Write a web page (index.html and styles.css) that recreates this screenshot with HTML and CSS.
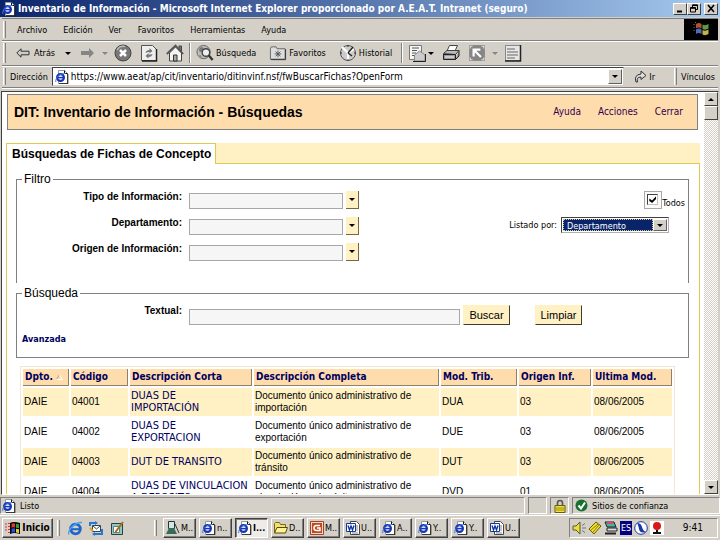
FILE: index.html
```
<!DOCTYPE html>
<html lang="es">

<head>
    <meta charset="UTF-8">
    <meta name="viewport" content="width=device-width, initial-scale=1.0">
    <title>Inventario de Información</title>
    <link rel="stylesheet" href="styles.css">
</head>

<body>
    <svg class="sprite" aria-hidden="true">
        <symbol id="ie" viewBox="0 0 14 14">
            <path d="M3.500 .5h6l3 3v10h-9z" fill="#fff" stroke="#999"/>
            <path d="M9.500 .5v3h3M12.800 4v9.800H4" fill="none" stroke="#111"/>
            <circle cx="5.500" cy="7.500" r="3.400" fill="#fff" stroke="#1634b4" stroke-width="2.200"/>
            <path d="M3 7.600h6" stroke="#1634b4" stroke-width="1.500"/>
            <path d="M.8 12C0 8 5 3 10.500 3.500" fill="none" stroke="#3a7be0" stroke-width="1"/>
        </symbol>
        <symbol id="word" viewBox="0 0 14 14">
            <path d="M4.500 .5h6l3 3v10h-9z" fill="#fff" stroke="#444"/>
            <path d="M10 5h2M10 7h2M10 9h2M6 12h6" stroke="#888"/>
            <path d="M.5 2.500h9v8h-9z" fill="#fff" stroke="#123a9c"/>
            <path d="M2 4.500l1.500 4.500L5 5l1.500 4L8 4.500" fill="none" stroke="#123a9c" stroke-width="1.400"/>
        </symbol>
    </svg>

    <header class="titlebar">
        <svg class="icon14"><use href="#ie"/></svg>
        <h1>Inventario de Información - Microsoft Internet Explorer proporcionado por A.E.A.T. Intranet (seguro)</h1>
        <div class="window-buttons">
            <button aria-label="Minimizar"><svg viewBox="0 0 10 9"><path d="M2 7.500h5" stroke="#000" stroke-width="2"/></svg></button>
            <button aria-label="Restaurar"><svg viewBox="0 0 10 9"><path d="M3.500 3V.8h5v4.700H7M3.500 1.500h5M1.500 3.500h5v4.500h-5zM1.500 4.300h5" fill="none" stroke="#000"/></svg></button>
            <button class="close" aria-label="Cerrar ventana"><svg viewBox="0 0 10 9"><path d="M2 1l6 7M8 1L2 8" stroke="#000" stroke-width="1.600"/></svg></button>
        </div>
    </header>

    <nav class="menubar">
        <span class="grip"></span>
        <button>Archivo</button>
        <button>Edición</button>
        <button>Ver</button>
        <button>Favoritos</button>
        <button>Herramientas</button>
        <button>Ayuda</button>
        <svg class="throbber" viewBox="0 0 34 21">
            <path d="M0 0h34v21H0z" fill="#000"/>
            <path d="M12 5q3-2 5.500 0v4.500q-3-2-5.500 0z" fill="#b4532f"/>
            <path d="M18.500 5.500q3 1.500 6-.5v4.500q-3 2-6 .5z" fill="#5f9a4a"/>
            <path d="M12 10.500q3-2 5.500 0V15q-3-2-5.500 0z" fill="#4a6fb8"/>
            <path d="M18.500 11q3 1.500 6-.5V15q-3 2-6 .5z" fill="#c9b04a"/>
            <path d="M10 5v1M10 8v1M10 11v1M11 3.500h1" stroke="#774"/>
        </svg>
    </nav>

    <div class="toolbar">
        <span class="grip"></span>
        <button class="tool back"><svg viewBox="0 0 14 12"><path d="M.8 6L5 1.800v2.400h8v3.600H5v2.400z" fill="#ccc" stroke="#333"/></svg>Atrás</button>
        <span class="caret"></span>
        <button class="tool forward" aria-label="Adelante"><svg viewBox="0 0 14 12"><path d="M14 6L9 1v3H1v4h8v3z" fill="#858585"/></svg></button>
        <span class="caret off"></span>
        <button class="tool stop" aria-label="Detener"><svg viewBox="0 0 18 18"><circle cx="9" cy="9" r="8" fill="#777" stroke="#444"/><path d="M3 6q3-5 8-3.500" fill="none" stroke="#bbb" stroke-width="1.500"/><path d="M6 6l6 6M12 6l-6 6" stroke="#fff" stroke-width="2.500"/></svg></button>
        <button class="tool refresh" aria-label="Actualizar"><svg viewBox="0 0 18 18"><path d="M1.500 1.500h11l4 4v11h-15z" fill="#eee" stroke="#555"/><path d="M16.500 5v12H2" fill="none" stroke="#222" stroke-width="1.500"/><path d="M5.500 9q.5-3 4-3V4l3 3-3 2.500V8q-2 0-4 1zM12.500 10q-.5 3-4 3v1.500l-3-2.500 3-3v1.500q2 0 4-.5z" fill="#777"/></svg></button>
        <button class="tool home" aria-label="Inicio"><svg viewBox="0 0 18 18"><path d="M13 2h2.500v5H13z" fill="#777" stroke="#444"/><path d="M3.500 9v8h12V9L9.500 3z" fill="#f4f4f4" stroke="#444"/><path d="M.8 10L9.500 1.500l7.700 8.500" fill="none" stroke="#555" stroke-width="1.800"/><path d="M7.500 11h3.500v6H7.500z" fill="#aaa" stroke="#333"/></svg></button>
        <span class="divider"></span>
        <button class="tool search"><svg viewBox="0 0 19 18"><circle cx="8" cy="8" r="7" fill="#bbb" stroke="#666"/><path d="M3 5q3-4 5-1-1 4-4 4zM3 11q3 0 3 3" fill="#777"/><circle cx="10.500" cy="8.500" r="4" fill="#eee" stroke="#444" stroke-width="1.500"/><path d="M13.500 11.500l4 5" stroke="#333" stroke-width="2.500"/></svg>Búsqueda</button>
        <button class="tool favs"><svg viewBox="0 0 19 16"><path d="M1.500 3.500l1-2h5l1 2h8.500v11H1.500z" fill="#ddd" stroke="#666"/><path d="M17.500 4v11H2" fill="none" stroke="#333"/><path d="M9.500 5.500v7M6 9h7M7 6.500l5 5M12 6.500l-5 5" stroke="#555"/></svg>Favoritos</button>
        <button class="tool history"><svg viewBox="0 0 18 18"><circle cx="9" cy="9" r="7.500" fill="#ccc" stroke="#555"/><path d="M9 9L3 3M9 9l6-4M9 9v7" stroke="#fff" stroke-width="2"/><path d="M9 9l5-6M9 9l4 3" stroke="#222" stroke-width="1.400"/><path d="M9 1v2M9 15v2M1 9h2M15 9h2" stroke="#333"/></svg>Historial</button>
        <span class="divider"></span>
        <button class="tool mail" aria-label="Correo"><svg viewBox="0 0 18 18"><path d="M1.500 1.500h12v14h-12z" fill="#f5f5f5" stroke="#777"/><path d="M4 4h7M4 6.500h5M4 9h4M4 11.500h2" stroke="#555"/><path d="M6.500 11l5-4 5.500 4v6H6.500z" fill="#ccc" stroke="#888"/><path d="M17.500 10v7.500H5" fill="none" stroke="#222"/></svg></button>
        <span class="caret"></span>
        <button class="tool print" aria-label="Imprimir"><svg viewBox="0 0 18 18"><path d="M5 7l2.500-5.500h8L13 7z" fill="#fff" stroke="#444"/><path d="M1.500 9.500L5 6.500h12l-3.500 4z" fill="#bbb" stroke="#444"/><path d="M1.500 10v5.500h12V10.500H1.500zM13.500 15.500L17 12V6.500" fill="#999" stroke="#222"/><path d="M3 13h9" stroke="#fff"/></svg></button>
        <button class="tool size" aria-label="Tamaño"><svg viewBox="0 0 16 16"><path d="M1 1h14v14H1z" fill="#858585"/><path d="M5 11V5h6M5.500 5.500l6 6" fill="none" stroke="#fff" stroke-width="2"/><path d="M2 4V2h2M12 2h2v2M2 12v2h2M12 14h2v-2" fill="none" stroke="#ddd"/></svg></button>
        <span class="caret off"></span>
        <button class="tool discuss" aria-label="Discutir"><svg viewBox="0 0 18 18"><path d="M1.500 1.500h15v15h-15z" fill="#e6e6e6" stroke="#888"/><path d="M16.500 1v16H1" fill="none" stroke="#222" stroke-width="1.500"/><path d="M3 5h8M3 8h11M3 11h11M3 14h8" stroke="#666" stroke-width="1.200"/></svg></button>
    </div>

    <form class="addressbar">
        <span class="grip"></span>
        <label for="url">Dirección</label>
        <div class="address">
            <svg class="icon14"><use href="#ie"/></svg>
            <input id="url" type="text" value="https://www.aeat/ap/cit/inventario/ditinvinf.nsf/fwBuscarFichas?OpenForm">
            <button type="button" class="drop" aria-label="Mostrar direcciones"><span class="caret"></span></button>
        </div>
        <button type="button" class="go"><svg viewBox="0 0 13 13"><path d="M2 12Q-.5 5 7 4V1l5 4.500-5 4V7Q2 7 3.500 12z" fill="#ddd" stroke="#333"/></svg>Ir</button>
        <span class="grip"></span>
        <button type="button" class="links">Vínculos</button>
    </form>

    <div class="viewport">
        <main class="page">
            <div class="banner">
                <h2>DIT: Inventario de Información - Búsquedas</h2>
                <a href="#">Ayuda</a>
                <a href="#">Acciones</a>
                <a href="#">Cerrar</a>
            </div>

            <div class="tabs"><a class="tab" href="#">Búsquedas de Fichas de Concepto</a><span class="tab-fill"></span></div>

            <div class="panel">
                <form>
                    <fieldset class="filter">
                        <legend>Filtro</legend>
                        <div class="fields">
                            <label for="tipo">Tipo de Información:</label>
                            <input id="tipo" type="text">
                            <button type="button" class="pick" aria-label="Elegir tipo"><span class="caret"></span></button>
                            <label for="depto">Departamento:</label>
                            <input id="depto" type="text">
                            <button type="button" class="pick" aria-label="Elegir departamento"><span class="caret"></span></button>
                            <label for="origen">Origen de Información:</label>
                            <input id="origen" type="text">
                            <button type="button" class="pick" aria-label="Elegir origen"><span class="caret"></span></button>
                        </div>
                        <div class="listing">
                            <label class="all"><span class="check"><input type="checkbox" checked></span>Todos</label>
                            <div class="by">
                                <label for="listado">Listado por:</label>
                                <div class="select">
                                    <select id="listado">
                                        <option>Departamento</option>
                                    </select>
                                    <span class="drop"><span class="caret"></span></span>
                                </div>
                            </div>
                        </div>
                    </fieldset>

                    <fieldset class="search-box">
                        <legend>Búsqueda</legend>
                        <div class="text-search">
                            <label for="textual">Textual:</label>
                            <input id="textual" type="text">
                            <div class="actions">
                                <button type="button">Buscar</button>
                                <button type="reset">Limpiar</button>
                            </div>
                        </div>
                        <a class="advanced" href="#">Avanzada</a>
                    </fieldset>
                </form>

                <table>
                    <colgroup>
                        <col class="c-dpto"><col class="c-codigo"><col class="c-corta"><col class="c-completa"><col class="c-mod"><col class="c-origen"><col class="c-fecha">
                    </colgroup>
                    <thead>
                        <tr>
                            <th>Dpto. <svg class="sort" viewBox="0 0 7 6"><path d="M.5 5.500L3.500 .5" stroke="#b98" fill="none"/><path d="M3.500 .5l3 5h-6" stroke="#fff" fill="none"/></svg></th>
                            <th>Código</th>
                            <th>Descripción Corta</th>
                            <th>Descripción Completa</th>
                            <th>Mod. Trib.</th>
                            <th>Origen Inf.</th>
                            <th>Ultima Mod.</th>
                        </tr>
                    </thead>
                    <tbody>
                        <tr>
                            <td>DAIE</td>
                            <td>04001</td>
                            <td><a href="#">DUAS DE<br>IMPORTACIÓN</a></td>
                            <td>Documento único administrativo de importación</td>
                            <td>DUA</td>
                            <td>03</td>
                            <td>08/06/2005</td>
                        </tr>
                        <tr>
                            <td>DAIE</td>
                            <td>04002</td>
                            <td><a href="#">DUAS DE<br>EXPORTACION</a></td>
                            <td>Documento único administrativo de exportación</td>
                            <td>DUE</td>
                            <td>03</td>
                            <td>08/06/2005</td>
                        </tr>
                        <tr>
                            <td>DAIE</td>
                            <td>04003</td>
                            <td><a href="#">DUT DE TRANSITO</a></td>
                            <td>Documento único administrativo de<br>tránsito</td>
                            <td>DUT</td>
                            <td>03</td>
                            <td>08/06/2005</td>
                        </tr>
                        <tr>
                            <td>DAIE</td>
                            <td>04004</td>
                            <td><a href="#">DUAS DE VINCULACION<br>A DEPOSITO</a></td>
                            <td>Documento único administrativo de vinculación a depósito</td>
                            <td>DVD</td>
                            <td>01</td>
                            <td>08/06/2005</td>
                        </tr>
                    </tbody>
                </table>
            </div>
        </main>
        <div class="scrollbar">
            <button aria-label="Subir"><span class="caret up"></span></button>
            <span class="thumb"></span>
            <span class="track"></span>
            <button aria-label="Bajar"><span class="caret"></span></button>
        </div>
    </div>

    <div class="statusbar">
        <div class="cell status"><svg class="icon14"><use href="#ie"/></svg>Listo</div>
        <div class="cell blank"></div>
        <div class="cell lock"><svg viewBox="0 0 12 14"><path d="M3.500 7V4q0-2.500 2.500-2.500T8.500 4v3" fill="none" stroke="#555" stroke-width="1.600"/><path d="M1 6.500h10v7H1z" fill="#f0e040" stroke="#665c00"/><path d="M2 9h8M2 11h8" stroke="#998a10"/></svg></div>
        <div class="cell zone"><svg viewBox="0 0 13 13"><circle cx="6.500" cy="6.500" r="6" fill="#187030"/><path d="M3.500 6.500l2.500 3 4-6" fill="none" stroke="#fff" stroke-width="2"/></svg>Sitios de confianza</div>
    </div>

    <footer class="taskbar">
        <button class="start"><svg viewBox="0 0 16 14"><path d="M0 3h2M0 6h2M0 9h2M3 2.500h2M3 5.500h2M3 8.500h2M3 11.500h2" stroke="#d33"/><path d="M5 2q3-2 10 0v11q-6-2-10 0z" fill="#000"/><path d="M6.500 2.800q2-.8 3.500-.2v4q-2-.6-3.500.2z" fill="#e03a20"/><path d="M11 2.800q1.500 0 3 .5v4q-1.500-.6-3-.6z" fill="#30a030"/><path d="M6.500 7.800q2-.8 3.500-.2v4q-2-.6-3.500.2z" fill="#2850d8"/><path d="M11 7.700q1.500 0 3 .5v4q-1.500-.6-3-.6z" fill="#e8d020"/></svg>Inicio</button>
        <span class="grip"></span>
        <div class="quick">
            <button aria-label="Internet Explorer"><svg viewBox="0 0 15 15"><circle cx="7.500" cy="8" r="4.800" fill="none" stroke="#1c66c8" stroke-width="2.800"/><path d="M4 8.200h9" stroke="#1c66c8" stroke-width="2"/><path d="M.8 13.500C-.5 9 7 1 14 1.500" fill="none" stroke="#48a0f0" stroke-width="1.500"/></svg></button>
            <button aria-label="Outlook Express"><svg viewBox="0 0 15 15"><path d="M3.500 4.500h8v6h-8z" fill="#fff" stroke="#345"/><path d="M4 5l3.500 3L11 5" fill="none" stroke="#345"/><path d="M1 5V2h6M5 13h8V8" fill="none" stroke="#2878d0" stroke-width="2"/><path d="M6 0l3 2-3 2zM6 11v4l-3-2z" fill="#2878d0"/><path d="M1 7l3 3" stroke="#e0a020" stroke-width="2"/></svg></button>
            <button aria-label="Mostrar escritorio"><svg viewBox="0 0 15 15"><path d="M1.500 2.500h11v11h-11z" fill="#8cc8c8" stroke="#244"/><path d="M3.500 5.500h6v6h-6z" fill="#fff" stroke="#777"/><path d="M13 1L7 9l-1.500 2" stroke="#a07010" stroke-width="2"/></svg></button>
        </div>
        <span class="grip"></span>
        <div class="tasks">
            <button><svg viewBox="0 0 14 14"><path d="M2.500 .5h6v7h-6z" fill="#cfe8e0" stroke="#234"/><path d="M0 13l3-6h5l3 6z" fill="#3a6a5a"/><path d="M9 3l4 9" stroke="#333"/></svg>M..</button>
            <button><svg><use href="#ie"/></svg>n..</button>
            <button class="active"><svg><use href="#ie"/></svg>I...</button>
            <button><svg viewBox="0 0 14 14"><path d="M.5 11.500v-9l1-1h4l1 2h5v8z" fill="#f4e070" stroke="#776a10"/><path d="M.5 12L3 6.500h10.500L11.500 12z" fill="#fff29a" stroke="#554a00"/></svg>D..</button>
            <button><svg viewBox="0 0 14 14"><path d="M.5 .5h13v13H.5z" fill="#e8dcd0" stroke="#b0401c"/><path d="M2 2h10v10H2z" fill="#c04a20"/><path d="M10 4.500H6.500A2.500 2.500 0 0 0 6.500 9.500H10V7H7" fill="none" stroke="#fff" stroke-width="1.500"/></svg>M..</button>
            <button><svg><use href="#word"/></svg>U..</button>
            <button><svg><use href="#ie"/></svg>A..</button>
            <button><svg><use href="#ie"/></svg>Y..</button>
            <button><svg><use href="#ie"/></svg>Y..</button>
            <button><svg><use href="#word"/></svg>U..</button>
        </div>
        <div class="tray">
            <svg viewBox="0 0 14 14"><path d="M1 5h3l4-4v12L4 9H1z" fill="#f0e030" stroke="#554"/><path d="M10 4.500l3-2M10 7h4M10 9.500l3 2" stroke="#777"/></svg>
            <svg viewBox="0 0 14 14"><path d="M1 8l7-7 5 4-7 8z" fill="#f0e030" stroke="#665c00"/><path d="M3 9l7-6M5 11l6-7" stroke="#887a10"/></svg>
            <svg viewBox="0 0 14 14"><path d="M1 1h9l2 5H3z" fill="#40b8a0" stroke="#222"/><path d="M3 2h6" stroke="#e04080" stroke-width="2"/><path d="M3 7h10v3H3z" fill="#ddd" stroke="#222"/><path d="M1 12.500h11" stroke="#222" stroke-width="2"/></svg>
            <span class="lang">ES</span>
            <svg viewBox="0 0 14 14"><circle cx="7" cy="7" r="6.300" fill="#fff" stroke="#1838a8"/><path d="M3 2q4 0 5 4t4 5q-6 2-7-3T3 2z" fill="#1838a8"/></svg>
            <svg viewBox="0 0 14 14"><path d="M0 0h14v14H0z" fill="#fff"/><circle cx="7" cy="5" r="4" fill="#d81818"/><path d="M6 9h2v2h3v2H3v-2h3z" fill="#111"/></svg>
            <time>9:41</time>
        </div>
    </footer>
</body>

</html>
```

FILE: styles.css
```
* {
    box-sizing: border-box;
}

body {
    font-family: "DejaVu Sans Condensed", "DejaVu Sans", sans-serif;
    font-size: 9px;
    line-height: 12px;
    color: #000;
    background: #d4d0c8;
    margin: 0;
    height: 100vh;
    display: flex;
    flex-direction: column;
    overflow: hidden;
}

button,
input,
select {
    font: inherit;
    color: inherit;
    margin: 0;
    padding: 0;
    border: none;
    border-radius: 0;
    background: none;
    outline: none;
}

button {
    display: flex;
    align-items: center;
    justify-content: center;
    cursor: pointer;
}

a {
    color: #000060;
    text-decoration: none;
}

svg {
    display: block;
    flex: none;
}

.sprite {
    position: absolute;
    width: 0;
    height: 0;
}

.icon14 {
    width: 14px;
    height: 14px;
}

.grip {
    width: 3px;
    align-self: stretch;
    margin: 2px 0;
    border-left: 1px solid #fff;
    border-right: 1px solid #808080;
}

.caret {
    border: 3px solid transparent;
    border-top-color: #000;
    border-bottom: none;
}

.caret.off {
    border-top-color: #858585;
}

.caret.up {
    border-top: none;
    border-bottom: 3px solid #000;
}

/* window title */
.titlebar {
    display: flex;
    align-items: center;
    gap: 2px;
    height: 17px;
    padding: 0 2px;
    background: linear-gradient(to right, #0a246a, #a6caf0);
}

.titlebar h1 {
    flex: 1;
    margin: 0;
    color: #fff;
    font-size: 10px;
    font-weight: bold;
    white-space: nowrap;
}

.window-buttons {
    display: flex;
}

.window-buttons button {
    width: 14px;
    height: 12px;
    background: #d4d0c8;
    border: 1px solid;
    border-color: #fff #404040 #404040 #fff;
}

.window-buttons .close {
    margin-left: 3px;
}

.window-buttons svg {
    width: 10px;
    height: 9px;
}

/* menus and toolbars */
.menubar,
.toolbar,
.addressbar {
    display: flex;
    align-items: center;
    margin: 0 2px;
    padding-left: 1px;
    border-bottom: 1px solid #808080;
    box-shadow: 0 1px #fff;
}

.menubar {
    height: 23px;
    margin-top: 1px;
    border-top: 1px solid #808080;
    gap: 16px;
}

.menubar .grip {
    margin-right: -5px;
}

.throbber {
    width: 34px;
    height: 21px;
    margin-left: auto;
}

.toolbar {
    height: 25px;
}

.tool {
    gap: 4px;
}

.tool svg {
    width: 18px;
    height: 18px;
}

.back {
    margin: 0 10px 0 10px;
}

.back svg,
.forward svg {
    width: 14px;
    height: 12px;
}

.forward {
    margin: 0 8px 0 9px;
}

.stop {
    margin-left: 6px;
}

.refresh,
.home {
    margin-left: 8px;
}

.search,
.favs,
.history {
    gap: 2px;
    margin-right: 13px;
}

.divider {
    width: 2px;
    height: 20px;
    margin: 0 5px;
    border-left: 1px solid #808080;
    border-right: 1px solid #fff;
}

.history {
    margin-right: 4px;
}

.mail {
    margin-right: 2px;
}

.print {
    margin: 0 8px;
}

.size {
    margin-right: 6px;
}

.discuss {
    margin-left: 6px;
}

.addressbar {
    height: 22px;
    gap: 4px;
}

.address {
    flex: 1;
    display: flex;
    align-items: center;
    height: 19px;
    padding: 1px 1px 1px 2px;
    background: #fff;
    border: 1px solid #404040;
    border-color: #404040 #d4d0c8 #d4d0c8 #404040;
}

.address input {
    flex: 1;
    min-width: 0;
    padding-left: 2px;
    font-size: 10px;
}

.drop {
    display: flex;
    align-items: center;
    justify-content: center;
    width: 14px;
    align-self: stretch;
    background: #d4d0c8;
    border: 1px solid;
    border-color: #fff #606060 #606060 #fff;
}

.go {
    gap: 2px;
    padding: 0 15px 0 6px;
}

.go svg {
    width: 13px;
    height: 13px;
}

.links {
    padding-right: 3px;
}

/* document area */
.viewport {
    flex: 1;
    min-height: 0;
    display: flex;
    margin: 3px 1px 0 1px;
    border: 1px solid #404040;
    border-bottom-color: #fff;
    border-right-color: #d4d0c8;
    background: #fff;
}

.page {
    flex: 1;
    overflow: hidden;
    padding: 2px 4px 0;
}

.banner {
    display: flex;
    align-items: center;
    gap: 17px;
    height: 36px;
    margin: 0 2px 0 1px;
    padding: 0 14px 0 6px;
    background: #ffdcac;
    border: 1px solid #808080;
}

.banner h2 {
    flex: 1;
    margin: 0;
    font: bold 14px/18px "Liberation Sans", Arial, sans-serif;
}

.banner a {
    font-size: 10px;
    color: #300050;
}

.tabs {
    display: flex;
    margin-top: 13px;
}

.tab {
    height: 21px;
    padding: 2px 4px 0 5px;
    border: 1px solid #dccb50;
    border-bottom: none;
    color: #000;
    font: bold 12px/16px "Liberation Sans", Arial, sans-serif;
}

.tab-fill {
    flex: 1;
    background: #fff1c4;
    border-bottom: 1px solid #dccb50;
}

.panel {
    min-height: 600px;
    padding: 9px 10px 0 9px;
    border: 1px solid #dccb50;
    border-top: none;
}

fieldset {
    min-width: 0;
    margin: 0;
    border: 1px solid #808080;
}

legend {
    margin-left: 0;
    padding: 0 2px;
    font: 12px/13px "Liberation Sans", Arial, sans-serif;
}

.filter {
    display: flex;
    justify-content: space-between;
    height: 110px;
    padding: 5px 3px 0 5px;
    border-bottom: none;
}

.fields {
    display: grid;
    grid-template-columns: 160px 154px 13px;
    grid-auto-rows: 18px;
    column-gap: 7px;
    row-gap: 8px;
}

.fields label,
.text-search label {
    font: bold 10px/12px "Liberation Sans", Arial, sans-serif;
    text-align: right;
}

.fields input,
.text-search input {
    align-self: end;
    height: 16px;
    background: #f6f6f6;
    border: 1px solid #a8a8a8;
}

.pick {
    margin-left: -4px;
    width: 13px;
    background: #fff1c4;
    border-right: 1px solid #706848;
    border-bottom: 1px solid #706848;
}

.listing {
    display: flex;
    flex-direction: column;
    align-items: flex-end;
    gap: 8px;
}

.all {
    display: flex;
    align-items: flex-end;
}

.check {
    width: 18px;
    height: 18px;
    padding: 2px;
    border: 1px solid #a8a8a8;
    background: #fafafa;
}

.check input {
    appearance: none;
    display: block;
    width: 11px;
    height: 11px;
    padding: 1px;
    background: #fff;
    border: 1px solid;
    border-color: #404040 #c0c0c0 #c0c0c0 #404040;
}

.check input:checked::before {
    content: "";
    display: block;
    width: 7px;
    height: 7px;
    background: #000;
    clip-path: polygon(0 35%, 40% 65%, 100% 0, 100% 40%, 40% 100%, 0 70%);
}

.by {
    display: flex;
    align-items: center;
    gap: 4px;
    margin-right: 16px;
}

.select {
    display: flex;
    width: 108px;
    height: 16px;
    padding: 1px;
    background: #fff;
    border: 1px solid;
    border-color: #404040 #b0b0b0 #b0b0b0 #404040;
}

.select select {
    appearance: none;
    flex: 1;
    min-width: 0;
    padding-left: 3px;
    color: #fff;
    background: #0a246a;
    border: 1px dotted #d8c890;
}

.search-box {
    height: 71px;
    margin-top: 4px;
    padding: 5px 4px 0 5px;
}

.text-search {
    display: grid;
    grid-template-columns: 160px 271px auto;
    column-gap: 7px;
}

.actions {
    display: flex;
    gap: 25px;
    margin-left: -4px;
}

.actions button {
    width: 47px;
    height: 20px;
    background: #fff1c4;
    border: 1px solid;
    border-color: #fff1c4 #403c28 #403c28 #fff1c4;
    font: 11px/14px "Liberation Sans", Arial, sans-serif;
}

.advanced {
    display: inline-block;
    margin-top: 8px;
    font-weight: bold;
}

table {
    table-layout: fixed;
    width: calc(100% - 18px);
    margin: 8px 0 0 4px;
    border: 1px solid #f0e8d0;
    border-collapse: separate;
    border-spacing: 2px;
}

.c-dpto {
    width: 46px;
}

.c-codigo {
    width: 57px;
}

.c-corta {
    width: 122px;
}

.c-completa {
    width: 185px;
}

.c-mod {
    width: 76px;
}

.c-origen {
    width: 72px;
}

th {
    height: 17px;
    padding: 0 0 0 2px;
    text-align: left;
    white-space: nowrap;
    font-size: 10px;
    color: #000060;
    background: #ffdcac;
    border-right: 1px solid #908068;
    border-bottom: 1px solid #908068;
}

.sort {
    display: inline-block;
    width: 7px;
    height: 6px;
}

td {
    height: 28px;
    padding: 2px 0 2px 1px;
    font: 10px/12px "Liberation Sans", Arial, sans-serif;
}

td a {
    font: 11px/12px "DejaVu Sans Condensed", "DejaVu Sans", sans-serif;
    white-space: nowrap;
}

tbody tr:nth-child(odd) td {
    background: #fff1c4;
}

.scrollbar {
    display: flex;
    flex-direction: column;
    width: 14px;
}

.scrollbar button,
.thumb {
    height: 14px;
    background: #d4d0c8;
    border: 1px solid;
    border-color: #fff #404040 #404040 #fff;
}

.track {
    flex: 1;
    background: repeating-conic-gradient(#d4d0c8 0 25%, #fff 0 50%) 0 0 / 2px 2px;
}

/* status and task bars */
.statusbar {
    display: flex;
    gap: 3px;
    height: 20px;
    padding: 2px 0 1px;
}

.cell {
    display: flex;
    align-items: center;
    gap: 4px;
    border: 1px solid;
    border-color: #808080 #fff #fff #808080;
}

.status {
    flex: 1;
    padding-left: 1px;
}

.blank {
    width: 19px;
}

.lock {
    width: 19px;
    justify-content: center;
}

.lock svg {
    width: 12px;
    height: 14px;
}

.zone {
    width: 148px;
    padding-left: 2px;
}

.zone svg {
    width: 13px;
    height: 13px;
}

.taskbar {
    display: flex;
    align-items: center;
    height: 25px;
    padding: 2px;
    border-top: 1px solid #fff;
}

.start,
.tasks button {
    height: 20px;
    border: 1px solid;
    border-color: #fff #404040 #404040 #fff;
    box-shadow: inset -1px -1px #808080;
}

.start {
    width: 51px;
    margin-right: 4px;
    gap: 1px;
    font-weight: bold;
    font-size: 10px;
}

.start svg {
    width: 16px;
    height: 14px;
}

.quick {
    display: flex;
    gap: 6px;
    width: 94px;
    padding-left: 8px;
}

.quick svg {
    width: 15px;
    height: 15px;
}

.tasks {
    flex: 1;
    display: flex;
    gap: 3px;
    padding-left: 6px;
}

.tasks button {
    width: 33px;
    justify-content: flex-start;
    gap: 1px;
    padding-left: 2px;
    overflow: hidden;
}

.tasks .active {
    font-weight: bold;
    background: #eeece8;
    border-color: #404040 #fff #fff #404040;
    box-shadow: inset 1px 1px #808080;
}

.tasks svg {
    width: 14px;
    height: 14px;
}

.tray {
    display: flex;
    align-items: center;
    gap: 2px;
    width: 149px;
    height: 20px;
    padding: 0 14px 0 2px;
    border: 1px solid;
    border-color: #808080 #fff #fff #808080;
}

.tray svg {
    width: 14px;
    height: 14px;
}

.lang {
    padding: 1px;
    color: #fff;
    background: #000080;
}

.tray time {
    margin-left: auto;
    font-size: 10px;
}
```
